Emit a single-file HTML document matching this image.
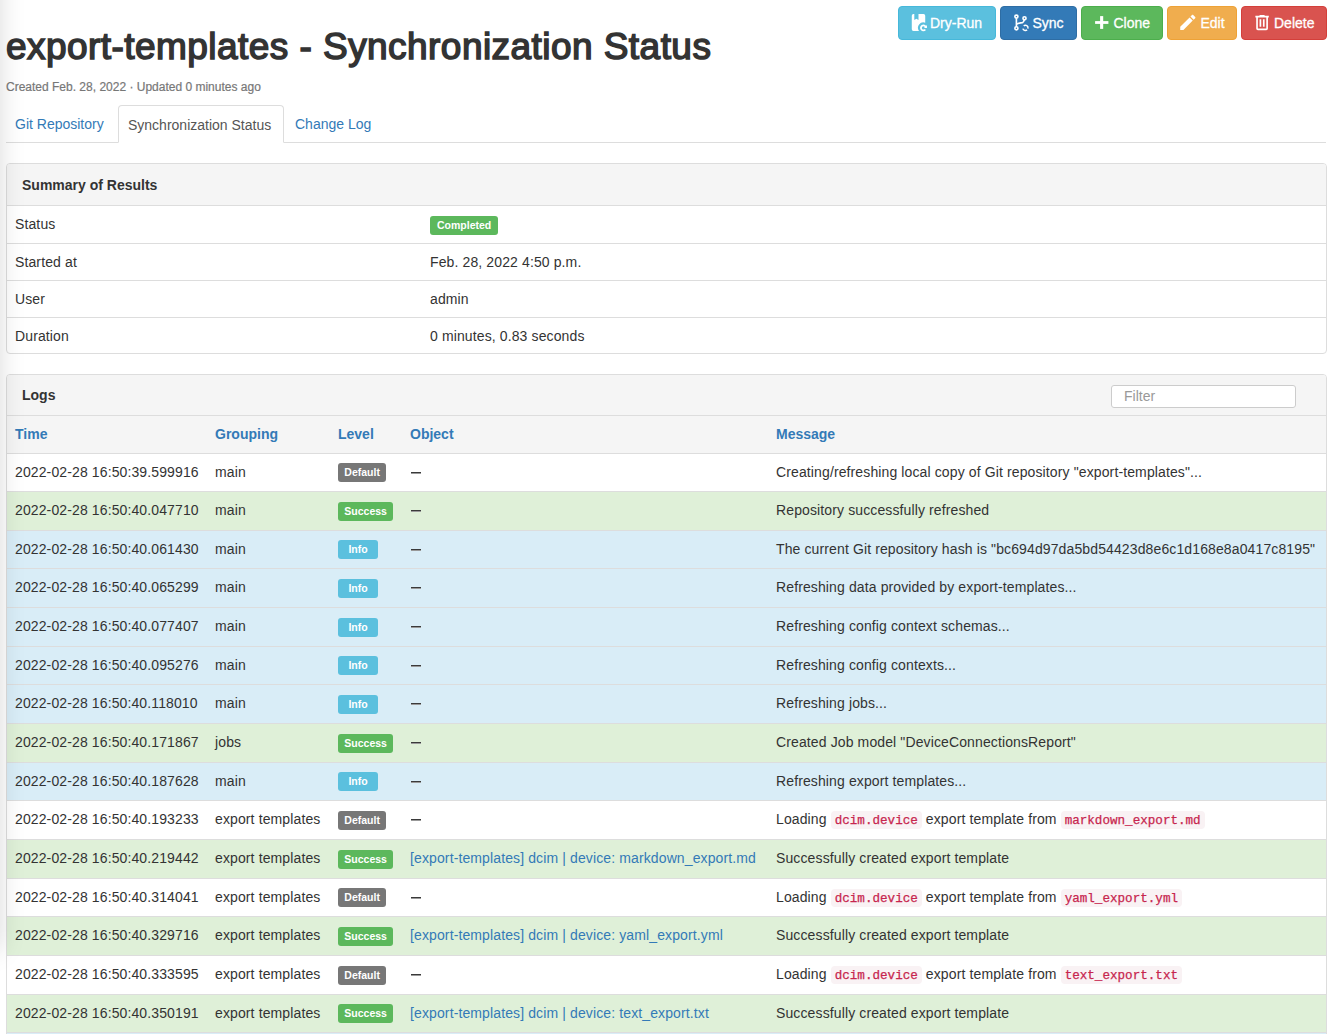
<!DOCTYPE html>
<html><head><meta charset="utf-8">
<style>
*{box-sizing:border-box}
html,body{margin:0;padding:0;background:#fff}
body{font-family:"Liberation Sans",sans-serif;font-size:14px;line-height:20px;color:#333;width:1331px;height:1034px;overflow:hidden;position:relative}
a{color:#337ab7;text-decoration:none}
.shade{position:absolute;left:-200px;top:-100px;width:200px;height:1050px;box-shadow:0 0 24px rgba(0,0,0,0.15);background:#fff;pointer-events:none;z-index:5}
h1{position:absolute;left:6px;top:24.5px;margin:0;font-size:37px;line-height:44px;font-weight:normal;color:#333;white-space:nowrap;-webkit-text-stroke:1.5px #333;letter-spacing:0.45px}
.sub{position:absolute;left:6px;top:80px;font-size:12px;line-height:14px;color:#777;white-space:nowrap;-webkit-text-stroke:0.2px #777}
.btn{position:absolute;top:6px;height:34px;border:1px solid;border-radius:4px;color:#fff;white-space:nowrap}
.btn span{position:absolute;top:6px;-webkit-text-stroke:0.3px #fff}
.b-info{background:#5bc0de;border-color:#46b8da}
.b-primary{background:#337ab7;border-color:#2e6da4}
.b-success{background:#5cb85c;border-color:#4cae4c}
.b-warning{background:#f0ad4e;border-color:#eea236}
.b-danger{background:#d9534f;border-color:#d43f3a}
.icons{position:absolute;left:0;top:0;width:1331px;height:50px;z-index:3}
.tabs{position:absolute;left:6px;top:105px;width:1320px;height:38px;border-bottom:1px solid #ddd}
.tab{position:absolute;top:0;height:38px;white-space:nowrap}
.tab.active{border:1px solid #ddd;border-bottom-color:#fff;border-radius:4px 4px 0 0;background:#fff;color:#555;height:38px}
.panel{position:absolute;left:6px;width:1320.5px;border:1px solid #ddd;border-radius:4px;background:#fff;overflow:hidden}
.ph{background:#f5f5f5;border-bottom:1px solid #ddd;font-weight:bold;position:relative}
table{border-collapse:collapse;width:100%}
td,th{padding:0;text-align:left;vertical-align:top}
.sum td{height:37px;border-top:1px solid #ddd;padding:8px 8px;letter-spacing:0.12px}
.sum tr:first-child td{border-top:0;height:36.5px;padding-top:7.5px}
.logs th{height:37px;background:#f5f5f5;font-weight:bold;color:#337ab7;padding:8px}
.logs td{border-top:1px solid #ddd;padding:8px 8px 0 8px;white-space:nowrap;letter-spacing:0.12px;position:relative}
.logs tr.r td{height:38.67px}
.s td{background:#dff0d8}
.i td{background:#d9edf7}
.lbl{display:inline-block;font-size:10.5px;font-weight:bold;color:#fff;border-radius:3px;line-height:19px;height:19px;padding:0 6.3px;vertical-align:top;margin-top:1.5px;min-width:40px;text-align:center;letter-spacing:0}
.l-d{background:#777}.l-s{background:#5cb85c}.l-i{background:#5bc0de}
code{font-family:"Liberation Mono",monospace;font-size:12.6px;color:#c7254e;background:#f9f2f4;border-radius:4px;padding:3px 4px 1px 4px;letter-spacing:0;-webkit-text-stroke:0.25px #c7254e}
.dash{position:absolute;left:9px;top:18px;width:10px;height:2px;background:linear-gradient(#3a3a3a 50%,#999 50%)}
</style></head>
<body>
<div class="shade"></div>

<h1>export-templates - Synchronization Status</h1>
<div class="sub">Created Feb. 28, 2022 · Updated 0 minutes ago</div>

<div class="btn b-info" style="left:898px;width:98px"><span style="left:31px">Dry-Run</span></div>
<div class="btn b-primary" style="left:1000px;width:77px"><span style="left:31.5px">Sync</span></div>
<div class="btn b-success" style="left:1081px;width:82px"><span style="left:31.5px">Clone</span></div>
<div class="btn b-warning" style="left:1167px;width:70px"><span style="left:32.5px">Edit</span></div>
<div class="btn b-danger" style="left:1241px;width:86px"><span style="left:32px">Delete</span></div>

<svg class="icons" width="1331" height="50" viewBox="0 0 1331 50">
  <!-- dry-run: book refresh -->
  <g transform="translate(910.1,12.4) scale(0.84)" fill="#fff">
    <path d="M4,2 H5 V9 L7.5,7.5 L10,9 V2 H16 A2,2 0 0 1 18,4 V12.28 A6.43,6.43 0 0 0 10.55,22 H4 A2,2 0 0 1 2,20 V4 A2,2 0 0 1 4,2 Z"/>
  </g>
  <path d="M925.7,27.06 A2.45,2.45 0 1 0 925.28,29.47" fill="none" stroke="#fff" stroke-width="1.8"/>
  <path d="M924.0,27.9 L926.95,27.9 L926.95,24.9 Z" fill="#fff"/>
  <!-- sync: source-branch-sync -->
  <g fill="none" stroke="#fff" stroke-width="1.65">
    <circle cx="1016.4" cy="16.6" r="1.55"/>
    <circle cx="1024.5" cy="18.3" r="1.55"/>
    <circle cx="1016.4" cy="28.3" r="1.55"/>
    <path d="M1016.4,18.2 V26.7"/>
    <path d="M1016.5,24.3 C1017.6,22.9 1021.6,23.0 1022.8,22.4 C1023.6,21.9 1024.0,21.0 1024.2,19.9"/>
  </g>
  <g fill="none" stroke="#fff" stroke-width="1.5">
    <path d="M1023.73,25.91 A2.6,2.6 0 0 1 1027.91,28.57"/>
    <path d="M1027.07,29.89 A2.6,2.6 0 0 1 1022.89,28.57"/>
  </g>
  <!-- plus thick -->
  <g fill="#fff">
    <rect x="1095.1" y="21.1" width="13.3" height="2.8"/>
    <rect x="1100.1" y="16.1" width="3.1" height="12.8"/>
  </g>
  <!-- pencil -->
  <g transform="translate(1177.7,12.2) scale(0.845)" fill="#fff">
    <path d="M20.71,7.04C21.1,6.65 21.1,6 20.71,5.63L18.37,3.29C18,2.9 17.35,2.9 16.96,3.29L15.12,5.12L18.87,8.87M3,17.25V21H6.75L17.81,9.93L14.06,6.18L3,17.25Z"/>
  </g>
  <!-- trash can outline -->
  <g transform="translate(1252,12.5) scale(0.84)" fill="#fff">
    <path d="M9,3V4H4V6H5V19A2,2 0 0,0 7,21H17A2,2 0 0,0 19,19V6H20V4H15V3H9M7,6H17V19H7V6M9,8V17H11V8H9M13,8V17H15V8H13Z"/>
  </g>
</svg>

<div class="tabs">
  <a class="tab" style="left:9px;padding-top:9px">Git Repository</a>
  <div class="tab active" style="left:112px;width:166px;padding:9px 0 0 9px">Synchronization Status</div>
  <a class="tab" style="left:289px;padding-top:9px">Change Log</a>
</div>

<div class="panel" style="top:163px;height:191px">
  <div class="ph" style="height:42px;padding:11px 15px">Summary of Results</div>
  <table class="sum">
    <tr><td style="width:415px">Status</td><td><span class="lbl l-s" style="margin-top:2px;min-width:0;padding:0 7px">Completed</span></td></tr>
    <tr><td>Started at</td><td>Feb. 28, 2022 4:50 p.m.</td></tr>
    <tr><td>User</td><td>admin</td></tr>
    <tr><td>Duration</td><td>0 minutes, 0.83 seconds</td></tr>
  </table>
</div>

<div class="panel logs" style="top:374px;height:700px">
  <div class="ph" style="height:41px;padding:10px 15px">Logs
    <div style="position:absolute;left:1104px;top:10px;width:185px;height:23px;border:1px solid #ccc;border-radius:3px;background:#fff;font-weight:normal;color:#999;font-size:14px;line-height:21px;padding-left:12px">Filter</div>
  </div>
  <table>
    <tr><th style="width:200px">Time</th><th style="width:123px">Grouping</th><th style="width:72px">Level</th><th style="width:366px">Object</th><th>Message</th></tr>
    <tr class="r"><td>2022-02-28 16:50:39.599916</td><td>main</td><td><span class="lbl l-d">Default</span></td><td><span class="dash"></span></td><td>Creating/refreshing local copy of Git repository "export-templates"...</td></tr>
    <tr class="r s"><td>2022-02-28 16:50:40.047710</td><td>main</td><td><span class="lbl l-s">Success</span></td><td><span class="dash"></span></td><td>Repository successfully refreshed</td></tr>
    <tr class="r i"><td>2022-02-28 16:50:40.061430</td><td>main</td><td><span class="lbl l-i">Info</span></td><td><span class="dash"></span></td><td>The current Git repository hash is "bc694d97da5bd54423d8e6c1d168e8a0417c8195"</td></tr>
    <tr class="r i"><td>2022-02-28 16:50:40.065299</td><td>main</td><td><span class="lbl l-i">Info</span></td><td><span class="dash"></span></td><td>Refreshing data provided by export-templates...</td></tr>
    <tr class="r i"><td>2022-02-28 16:50:40.077407</td><td>main</td><td><span class="lbl l-i">Info</span></td><td><span class="dash"></span></td><td>Refreshing config context schemas...</td></tr>
    <tr class="r i"><td>2022-02-28 16:50:40.095276</td><td>main</td><td><span class="lbl l-i">Info</span></td><td><span class="dash"></span></td><td>Refreshing config contexts...</td></tr>
    <tr class="r i"><td>2022-02-28 16:50:40.118010</td><td>main</td><td><span class="lbl l-i">Info</span></td><td><span class="dash"></span></td><td>Refreshing jobs...</td></tr>
    <tr class="r s"><td>2022-02-28 16:50:40.171867</td><td>jobs</td><td><span class="lbl l-s">Success</span></td><td><span class="dash"></span></td><td>Created Job model "DeviceConnectionsReport"</td></tr>
    <tr class="r i"><td>2022-02-28 16:50:40.187628</td><td>main</td><td><span class="lbl l-i">Info</span></td><td><span class="dash"></span></td><td>Refreshing export templates...</td></tr>
    <tr class="r"><td>2022-02-28 16:50:40.193233</td><td>export templates</td><td><span class="lbl l-d">Default</span></td><td><span class="dash"></span></td><td>Loading <code>dcim.device</code> export template from <code>markdown_export.md</code></td></tr>
    <tr class="r s"><td>2022-02-28 16:50:40.219442</td><td>export templates</td><td><span class="lbl l-s">Success</span></td><td><a>[export-templates] dcim | device: markdown_export.md</a></td><td>Successfully created export template</td></tr>
    <tr class="r"><td>2022-02-28 16:50:40.314041</td><td>export templates</td><td><span class="lbl l-d">Default</span></td><td><span class="dash"></span></td><td>Loading <code>dcim.device</code> export template from <code>yaml_export.yml</code></td></tr>
    <tr class="r s"><td>2022-02-28 16:50:40.329716</td><td>export templates</td><td><span class="lbl l-s">Success</span></td><td><a>[export-templates] dcim | device: yaml_export.yml</a></td><td>Successfully created export template</td></tr>
    <tr class="r"><td>2022-02-28 16:50:40.333595</td><td>export templates</td><td><span class="lbl l-d">Default</span></td><td><span class="dash"></span></td><td>Loading <code>dcim.device</code> export template from <code>text_export.txt</code></td></tr>
    <tr class="r s"><td>2022-02-28 16:50:40.350191</td><td>export templates</td><td><span class="lbl l-s">Success</span></td><td><a>[export-templates] dcim | device: text_export.txt</a></td><td>Successfully created export template</td></tr>
    <tr class="r i"><td>2022-02-28 16:50:40.361002</td><td>main</td><td><span class="lbl l-i">Info</span></td><td><span class="dash"></span></td><td>Refreshing jobs...</td></tr>
  </table>
</div>
</body></html>
